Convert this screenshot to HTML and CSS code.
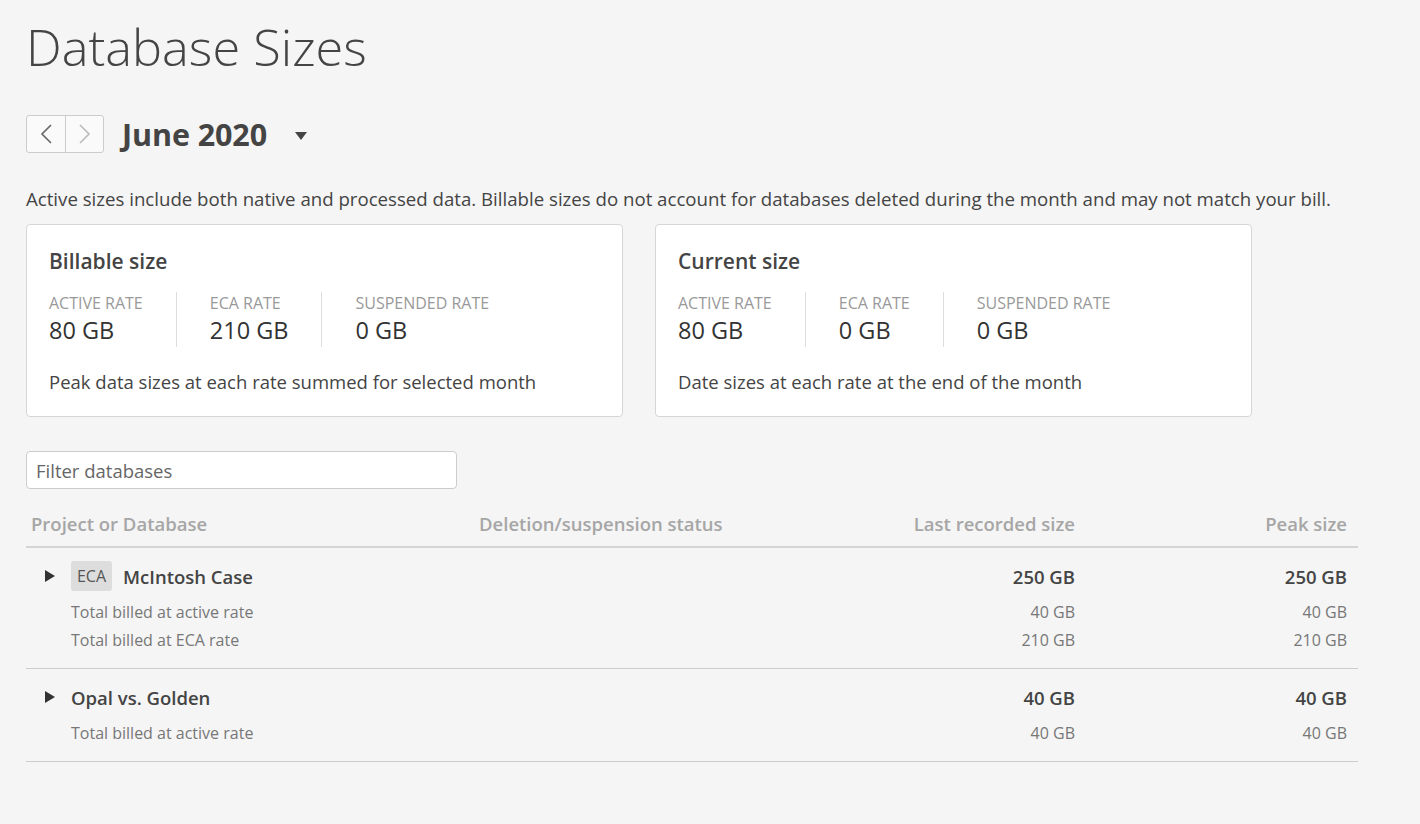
FILE: index.html
```html
<!DOCTYPE html>
<html>
<head>
<meta charset="utf-8">
<link rel="stylesheet" href="styles.css">
</head>
<body>
<div class="page">
  <h1 class="title">Database Sizes</h1>
  <div class="month-row">
    <div class="pager">
      <button class="pager-btn"><svg width="14" height="22" viewBox="0 0 14 22"><path d="M12 2 L3 11 L12 20" fill="none" stroke="#666" stroke-width="1.6"/></svg></button>
      <button class="pager-btn"><svg width="14" height="22" viewBox="0 0 14 22"><path d="M2 2 L11 11 L2 20" fill="none" stroke="#bbb" stroke-width="1.6"/></svg></button>
    </div>
    <div class="month">June 2020</div>
    <svg class="caret" width="12" height="8" viewBox="0 0 12 8"><path d="M0 0 H12 L6 8 Z" fill="#444"/></svg>
  </div>
  <p class="note">Active sizes include both native and processed data. Billable sizes do not account for databases deleted during the month and may not match your bill.</p>
  <div class="cards">
    <div class="card">
      <div class="card-title">Billable size</div>
      <div class="stats">
        <div class="stat"><div class="stat-label">Active rate</div><div class="stat-value">80 GB</div></div>
        <div class="stat"><div class="stat-label">ECA rate</div><div class="stat-value">210 GB</div></div>
        <div class="stat"><div class="stat-label">Suspended rate</div><div class="stat-value">0 GB</div></div>
      </div>
      <div class="card-foot">Peak data sizes at each rate summed for selected month</div>
    </div>
    <div class="card">
      <div class="card-title">Current size</div>
      <div class="stats">
        <div class="stat"><div class="stat-label">Active rate</div><div class="stat-value">80 GB</div></div>
        <div class="stat"><div class="stat-label">ECA rate</div><div class="stat-value">0 GB</div></div>
        <div class="stat"><div class="stat-label">Suspended rate</div><div class="stat-value">0 GB</div></div>
      </div>
      <div class="card-foot">Date sizes at each rate at the end of the month</div>
    </div>
  </div>
  <input class="filter" type="text" placeholder="Filter databases">
  <div class="table">
    <div class="thead">
      <div class="c-name">Project or Database</div>
      <div class="c-status">Deletion/suspension status</div>
      <div class="c-last">Last recorded size</div>
      <div class="c-peak">Peak size</div>
    </div>
    <div class="group">
      <div class="row main">
        <div class="c-name"><svg class="tri" width="10" height="12" viewBox="0 0 10 12"><path d="M0 0 L10 6 L0 12 Z" fill="#333"/></svg><span class="badge">ECA</span><span>McIntosh Case</span></div>
        <div class="c-status"></div>
        <div class="c-last">250 GB</div>
        <div class="c-peak">250 GB</div>
      </div>
      <div class="row sub">
        <div class="c-name">Total billed at active rate</div>
        <div class="c-status"></div>
        <div class="c-last">40 GB</div>
        <div class="c-peak">40 GB</div>
      </div>
      <div class="row sub">
        <div class="c-name">Total billed at ECA rate</div>
        <div class="c-status"></div>
        <div class="c-last">210 GB</div>
        <div class="c-peak">210 GB</div>
      </div>
    </div>
    <div class="group">
      <div class="row main">
        <div class="c-name"><svg class="tri" width="10" height="12" viewBox="0 0 10 12"><path d="M0 0 L10 6 L0 12 Z" fill="#333"/></svg><span>Opal vs. Golden</span></div>
        <div class="c-status"></div>
        <div class="c-last">40 GB</div>
        <div class="c-peak">40 GB</div>
      </div>
      <div class="row sub">
        <div class="c-name">Total billed at active rate</div>
        <div class="c-status"></div>
        <div class="c-last">40 GB</div>
        <div class="c-peak">40 GB</div>
      </div>
    </div>
  </div>
</div>
</body>
</html>
```
FILE: styles.css
```css
html, body {
  margin: 0;
  padding: 0;
  background: #f5f5f5;
  font-family: "Open Sans", "Noto Sans", sans-serif;
  color: #444;
}
.page {
  padding: 17px 0 0 26px;
}
.title {
  margin: 0;
  font-size: 50.5px;
  font-weight: 300;
  line-height: 60px;
  color: #444;
}
.month-row {
  display: flex;
  align-items: center;
  margin-top: 38px;
  height: 38px;
}
.pager {
  display: flex;
  border: 1px solid #ccc;
  border-radius: 3px;
  background: #fafafa;
  height: 36px;
}
.pager-btn {
  width: 38px;
  height: 36px;
  border: none;
  background: transparent;
  padding: 0;
  display: flex;
  align-items: center;
  justify-content: center;
}
.pager-btn + .pager-btn {
  border-left: 1px solid #ccc;
}
.month {
  margin-left: 18px;
  font-size: 30.5px;
  font-weight: 700;
  color: #444;
  letter-spacing: -0.1px;
}
.caret {
  margin-left: 28px;
  margin-top: 4px;
}
.note {
  margin: 35px 0 0 0;
  font-size: 18.65px;
  line-height: 22px;
  color: #444;
}
.cards {
  display: flex;
  gap: 32px;
  margin-top: 14px;
}
.card {
  width: 597px;
  height: 193px;
  box-sizing: border-box;
  background: #fff;
  border: 1px solid #d6d6d6;
  border-radius: 4px;
  padding: 23px 22px 0 22px;
}
.card-title {
  font-size: 21px;
  font-weight: 600;
  color: #444;
  line-height: 26px;
}
.stats {
  display: flex;
  margin-top: 18px;
}
.stat {
  padding: 0 33px;
  border-left: 1px solid #ddd;
  height: 55px;
}
.stat:first-child {
  padding-left: 0;
  border-left: none;
}
.stat-label {
  text-transform: uppercase;
  font-size: 16px;
  color: #999;
  line-height: 22px;
}
.stat-value {
  font-size: 23.5px;
  color: #333;
  line-height: 32px;
}
.card-foot {
  margin-top: 22px;
  font-size: 18.5px;
  color: #444;
  line-height: 26px;
}
.filter {
  display: block;
  margin-top: 34px;
  width: 431px;
  height: 38px;
  box-sizing: border-box;
  border: 1px solid #ccc;
  border-radius: 4px;
  background: #fff;
  padding: 0 9px;
  font-family: "Open Sans", "Noto Sans", sans-serif;
  font-size: 18.5px;
  color: #444;
  outline: none;
}
.filter::placeholder {
  color: #666;
}
.table {
  width: 1332px;
  margin-top: 22px;
}
.thead, .row {
  display: grid;
  grid-template-columns: 453px 1fr 320px 272px;
  align-items: center;
}
.thead {
  font-size: 18.5px;
  font-weight: 600;
  color: #a6a6a6;
  height: 35px;
  line-height: 26px;
  border-bottom: 2px solid #d4d4d4;
  align-items: start;
}
.thead .c-name { padding-left: 5px; }
.c-last, .c-peak {
  text-align: right;
}
.c-peak { padding-right: 11px; }
.c-last { margin-right: 11px; }
.group {
  border-bottom: 1px solid #ccc;
  padding: 13px 0 14px;
}
.row.main {
  height: 30px;
  font-size: 18.5px;
  font-weight: 600;
  color: #444;
}
.row.main .c-name {
  display: flex;
  align-items: center;
  padding-left: 19px;
}
.tri {
  margin-right: 16px;
}
.badge {
  display: inline-block;
  background: #ddd;
  border-radius: 3px;
  font-size: 16px;
  font-weight: 400;
  color: #555;
  width: 41px;
  height: 30px;
  line-height: 30px;
  text-align: center;
  margin-right: 11px;
}
.row.sub {
  height: 28px;
  font-size: 16px;
  color: #777;
}
.row.main + .row.sub {
  margin-top: 7px;
}
.row.sub .c-name {
  padding-left: 45px;
}
```
